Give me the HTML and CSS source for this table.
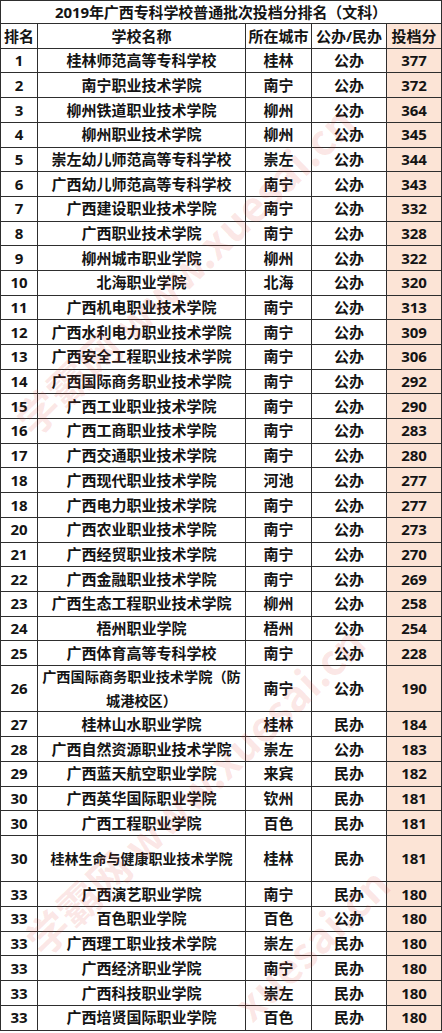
FILE: index.html
```html
<!DOCTYPE html>
<html lang="zh-CN">
<head>
<meta charset="utf-8">
<title>2019年广西专科学校普通批次投档分排名（文科）</title>
<link rel="stylesheet" href="styles.css">
</head>
<body>
<div class="sheet">
  <div class="table">
    <div class="row title"><div class="cell">2019年广西专科学校普通批次投档分排名（文科）</div></div>
    <div class="row head">
      <div class="cell">排名</div><div class="cell">学校名称</div><div class="cell">所在城市</div><div class="cell">公办/民办</div><div class="cell score">投档分</div>
    </div>
    <div class="row"><div class="cell">1</div><div class="cell">桂林师范高等专科学校</div><div class="cell">桂林</div><div class="cell">公办</div><div class="cell score">377</div></div>
    <div class="row"><div class="cell">2</div><div class="cell">南宁职业技术学院</div><div class="cell">南宁</div><div class="cell">公办</div><div class="cell score">372</div></div>
    <div class="row"><div class="cell">3</div><div class="cell">柳州铁道职业技术学院</div><div class="cell">柳州</div><div class="cell">公办</div><div class="cell score">364</div></div>
    <div class="row"><div class="cell">4</div><div class="cell">柳州职业技术学院</div><div class="cell">柳州</div><div class="cell">公办</div><div class="cell score">345</div></div>
    <div class="row"><div class="cell">5</div><div class="cell">崇左幼儿师范高等专科学校</div><div class="cell">崇左</div><div class="cell">公办</div><div class="cell score">344</div></div>
    <div class="row"><div class="cell">6</div><div class="cell">广西幼儿师范高等专科学校</div><div class="cell">南宁</div><div class="cell">公办</div><div class="cell score">343</div></div>
    <div class="row"><div class="cell">7</div><div class="cell">广西建设职业技术学院</div><div class="cell">南宁</div><div class="cell">公办</div><div class="cell score">332</div></div>
    <div class="row"><div class="cell">8</div><div class="cell">广西职业技术学院</div><div class="cell">南宁</div><div class="cell">公办</div><div class="cell score">328</div></div>
    <div class="row"><div class="cell">9</div><div class="cell">柳州城市职业学院</div><div class="cell">柳州</div><div class="cell">公办</div><div class="cell score">322</div></div>
    <div class="row"><div class="cell">10</div><div class="cell">北海职业学院</div><div class="cell">北海</div><div class="cell">公办</div><div class="cell score">320</div></div>
    <div class="row"><div class="cell">11</div><div class="cell">广西机电职业技术学院</div><div class="cell">南宁</div><div class="cell">公办</div><div class="cell score">313</div></div>
    <div class="row"><div class="cell">12</div><div class="cell">广西水利电力职业技术学院</div><div class="cell">南宁</div><div class="cell">公办</div><div class="cell score">309</div></div>
    <div class="row"><div class="cell">13</div><div class="cell">广西安全工程职业技术学院</div><div class="cell">南宁</div><div class="cell">公办</div><div class="cell score">306</div></div>
    <div class="row"><div class="cell">14</div><div class="cell">广西国际商务职业技术学院</div><div class="cell">南宁</div><div class="cell">公办</div><div class="cell score">292</div></div>
    <div class="row"><div class="cell">15</div><div class="cell">广西工业职业技术学院</div><div class="cell">南宁</div><div class="cell">公办</div><div class="cell score">290</div></div>
    <div class="row"><div class="cell">16</div><div class="cell">广西工商职业技术学院</div><div class="cell">南宁</div><div class="cell">公办</div><div class="cell score">283</div></div>
    <div class="row"><div class="cell">17</div><div class="cell">广西交通职业技术学院</div><div class="cell">南宁</div><div class="cell">公办</div><div class="cell score">280</div></div>
    <div class="row"><div class="cell">18</div><div class="cell">广西现代职业技术学院</div><div class="cell">河池</div><div class="cell">公办</div><div class="cell score">277</div></div>
    <div class="row"><div class="cell">18</div><div class="cell">广西电力职业技术学院</div><div class="cell">南宁</div><div class="cell">公办</div><div class="cell score">277</div></div>
    <div class="row"><div class="cell">20</div><div class="cell">广西农业职业技术学院</div><div class="cell">南宁</div><div class="cell">公办</div><div class="cell score">273</div></div>
    <div class="row"><div class="cell">21</div><div class="cell">广西经贸职业技术学院</div><div class="cell">南宁</div><div class="cell">公办</div><div class="cell score">270</div></div>
    <div class="row"><div class="cell">22</div><div class="cell">广西金融职业技术学院</div><div class="cell">南宁</div><div class="cell">公办</div><div class="cell score">269</div></div>
    <div class="row"><div class="cell">23</div><div class="cell">广西生态工程职业技术学院</div><div class="cell">柳州</div><div class="cell">公办</div><div class="cell score">258</div></div>
    <div class="row"><div class="cell">24</div><div class="cell">梧州职业学院</div><div class="cell">梧州</div><div class="cell">公办</div><div class="cell score">254</div></div>
    <div class="row"><div class="cell">25</div><div class="cell">广西体育高等专科学校</div><div class="cell">南宁</div><div class="cell">公办</div><div class="cell score">228</div></div>
    <div class="row tall"><div class="cell">26</div><div class="cell wrap">广西国际商务职业技术学院（防城港校区）</div><div class="cell">南宁</div><div class="cell">公办</div><div class="cell score">190</div></div>
    <div class="row"><div class="cell">27</div><div class="cell">桂林山水职业学院</div><div class="cell">桂林</div><div class="cell">民办</div><div class="cell score">184</div></div>
    <div class="row"><div class="cell">28</div><div class="cell">广西自然资源职业技术学院</div><div class="cell">崇左</div><div class="cell">公办</div><div class="cell score">183</div></div>
    <div class="row"><div class="cell">29</div><div class="cell">广西蓝天航空职业学院</div><div class="cell">来宾</div><div class="cell">民办</div><div class="cell score">182</div></div>
    <div class="row"><div class="cell">30</div><div class="cell">广西英华国际职业学院</div><div class="cell">钦州</div><div class="cell">民办</div><div class="cell score">181</div></div>
    <div class="row"><div class="cell">30</div><div class="cell">广西工程职业学院</div><div class="cell">百色</div><div class="cell">民办</div><div class="cell score">181</div></div>
    <div class="row tall"><div class="cell">30</div><div class="cell small">桂林生命与健康职业技术学院</div><div class="cell">桂林</div><div class="cell">民办</div><div class="cell score">181</div></div>
    <div class="row"><div class="cell">33</div><div class="cell">广西演艺职业学院</div><div class="cell">南宁</div><div class="cell">民办</div><div class="cell score">180</div></div>
    <div class="row"><div class="cell">33</div><div class="cell">百色职业学院</div><div class="cell">百色</div><div class="cell">公办</div><div class="cell score">180</div></div>
    <div class="row"><div class="cell">33</div><div class="cell">广西理工职业技术学院</div><div class="cell">崇左</div><div class="cell">民办</div><div class="cell score">180</div></div>
    <div class="row"><div class="cell">33</div><div class="cell">广西经济职业学院</div><div class="cell">南宁</div><div class="cell">民办</div><div class="cell score">180</div></div>
    <div class="row"><div class="cell">33</div><div class="cell">广西科技职业学院</div><div class="cell">崇左</div><div class="cell">民办</div><div class="cell score">180</div></div>
    <div class="row"><div class="cell">33</div><div class="cell">广西培贤国际职业学院</div><div class="cell">百色</div><div class="cell">民办</div><div class="cell score">180</div></div>
  </div>
  <div class="wm wm1">学霸网 www.xuesai.cn</div>
  <div class="wm wm2">学霸网 www.xuesai.cn</div>
  <div class="wm wm3">xuesai.cn</div>
</div>
</body>
</html>
```

FILE: styles.css
```css
html, body {
  margin: 0;
  padding: 0;
  background: #ffffff;
}

body {
  font-family: "Open Sans", "Noto Sans CJK SC", sans-serif;
  font-weight: 700;
  color: #141414;
}

.sheet {
  position: relative;
  width: 442px;
  height: 1033px;
  overflow: hidden;
}

.table {
  width: 442px;
  box-sizing: border-box;
  border-left: 1px solid #2e2e2e;
  border-top: 1px solid #2e2e2e;
}

.row {
  display: grid;
  grid-template-columns: 37px 208px 66px 75px 55px;
  height: 24.7px;
}

.row.title {
  grid-template-columns: 1fr;
  height: 23.4px;
}

.row.head {
  height: 24.4px;
}

.row.tall {
  height: 46.5px;
}

.cell {
  box-sizing: border-box;
  border-right: 1px solid #2e2e2e;
  border-bottom: 1px solid #2e2e2e;
  display: flex;
  align-items: center;
  justify-content: center;
  font-size: 15px;
  line-height: 1;
  white-space: nowrap;
  overflow: hidden;
}

.title .cell {
  font-size: 15px;
  letter-spacing: -0.1px;
}

.score {
  background: #fce4d6;
}

.cell.small {
  font-size: 14px;
}

.cell.wrap {
  font-size: 14.2px;
  white-space: normal;
  text-align: center;
  line-height: 24px;
  padding-top: 1px;
}

.wm {
  position: absolute;
  left: 0;
  top: 0;
  font-family: "Noto Sans CJK SC", sans-serif;
  font-weight: 700;
  font-size: 42px;
  line-height: 42px;
  height: 42px;
  white-space: nowrap;
  color: rgba(225, 70, 55, 0.13);
  transform-origin: 0 50%;
  transform: rotate(-44deg);
  pointer-events: none;
}

.wm1 {
  left: 22px;
  top: 405px;
}

.wm2 {
  left: 32px;
  top: 925px;
}

.wm3 {
  left: 240px;
  top: 990px;
}
```
